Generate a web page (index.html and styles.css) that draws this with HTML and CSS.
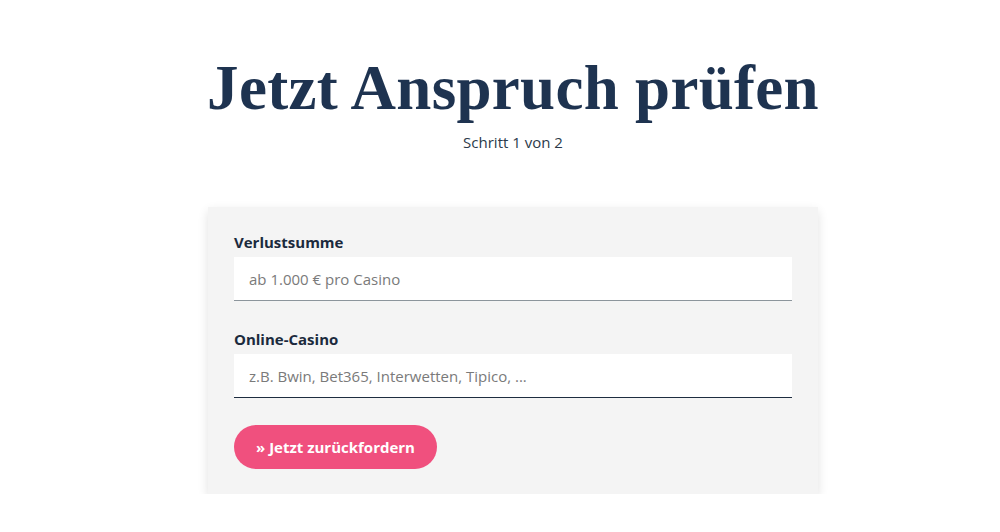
FILE: index.html
```html
<!DOCTYPE html>
<html lang="de">
<head>
<meta charset="utf-8">
<title>Jetzt Anspruch prüfen</title>
<link rel="stylesheet" href="styles.css">
</head>
<body>
<main class="wrap">
  <header class="head">
    <h1 class="title">Jetzt Anspruch prüfen</h1>
    <p class="step">Schritt 1 von 2</p>
  </header>
  <form class="card">
    <label class="label" for="sum">Verlustsumme</label>
    <input class="field field-light" id="sum" type="text" placeholder="ab 1.000 € pro Casino">
    <label class="label" for="casino">Online-Casino</label>
    <input class="field field-dark" id="casino" type="text" placeholder="z.B. Bwin, Bet365, Interwetten, Tipico, ...">
    <button class="btn" type="button">» Jetzt zurückfordern</button>
  </form>
</main>
</body>
</html>
```
FILE: styles.css
```css
* { box-sizing: border-box; }
html, body { margin: 0; padding: 0; background: #fff; }
body { font-family: "Open Sans", "Noto Sans", sans-serif; color: #1e3350; }
.wrap { width: 636px; margin: 0 auto; padding: 53px 0 0 26px; }
.head { text-align: center; }
.title {
  margin: 0 -40px;
  white-space: nowrap;
  font-family: "Liberation Serif", "DejaVu Serif", serif;
  font-weight: 700;
  font-size: 63px;
  line-height: 70px;
  color: #1e3350;
  letter-spacing: 0.3px;
}
.step { margin: 8px 0 0; font-size: 15px; line-height: 22px; color: #2b3a4a; }
.card {
  margin-top: 54px;
  background: #f4f4f4;
  padding: 24px 26px 25px;
  display: flex;
  flex-direction: column;
  align-items: flex-start;
  box-shadow: 0 4px 10px rgba(0,0,0,0.12);
}
.label { font-weight: 700; font-size: 15px; line-height: 22px; color: #1b2a3d; margin-bottom: 4px; }
.field {
  width: 100%;
  height: 44px;
  border: 0;
  background: #fff;
  padding: 0 15px;
  font-family: "Open Sans", "Noto Sans", sans-serif;
  font-size: 15px;
  color: #333;
  outline: none;
  margin-bottom: 27px;
}
.field::placeholder { color: #7a7a7a; }
.field-light { border-bottom: 1.5px solid #8c959c; }
.field-dark { border-bottom: 1.5px solid #1e2d40; }
.btn {
  height: 44px;
  padding: 0 22px;
  border: 0;
  border-radius: 22px;
  background: #f0507e;
  color: #fff;
  font-family: "Open Sans", "Noto Sans", sans-serif;
  font-weight: 700;
  font-size: 15px;
  cursor: pointer;
}
```
